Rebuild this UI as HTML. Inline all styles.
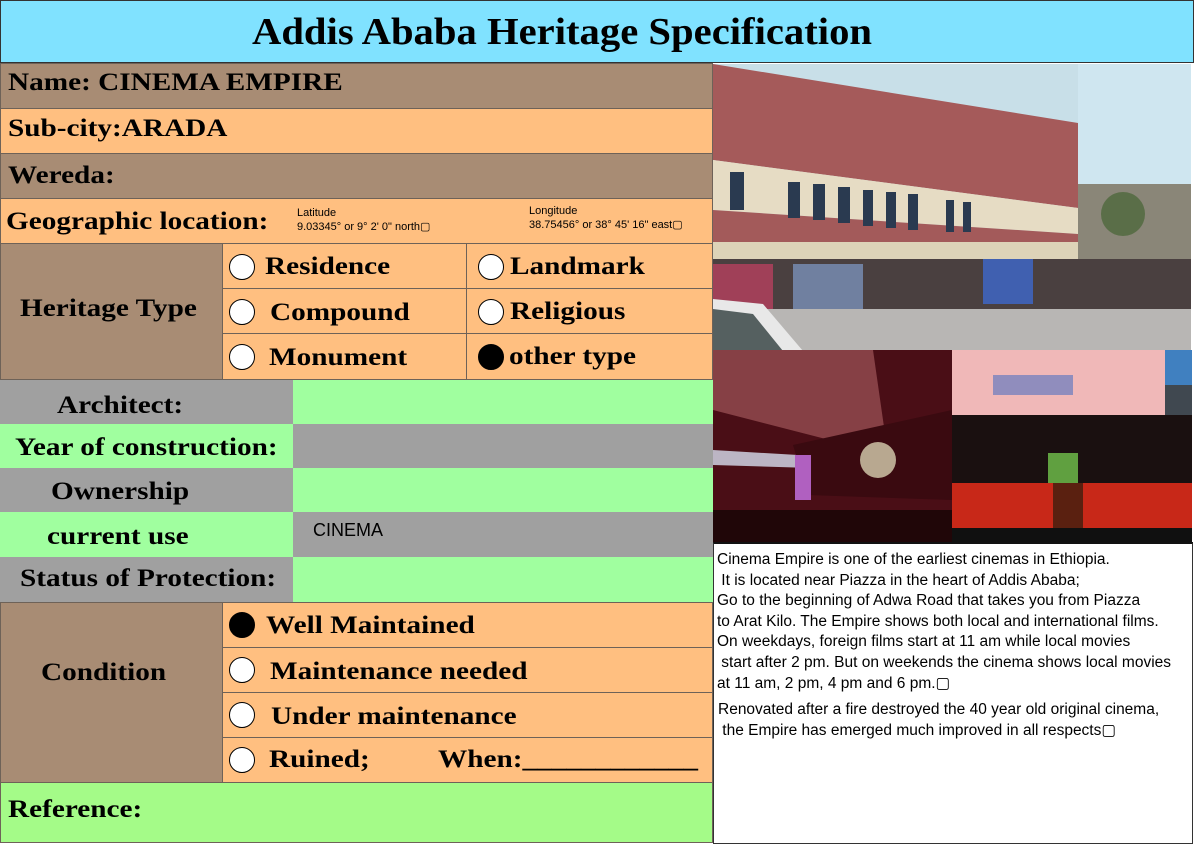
<!DOCTYPE html>
<html><head><meta charset="utf-8"><style>
*{margin:0;padding:0;box-sizing:border-box}
body{width:1194px;height:844px;position:relative;background:#fff;overflow:hidden;font-family:"Liberation Serif",serif}
.b{position:absolute}
.s{font-family:"Liberation Serif",serif;font-weight:bold;color:#000;position:absolute;white-space:nowrap;line-height:1;font-size:25px;transform:scaleX(1.17);transform-origin:0 0}
.br{background:#a88c74}.or{background:#ffbf80}.gr{background:#a0a0a0}.gn{background:#a0ff9f}
.ln{border:1px solid #6e6258}
.c{position:absolute;width:26px;height:26px;border-radius:50%;background:#fff;border:1.5px solid #000}
.c.f{background:#000}
.sans{font-family:"Liberation Sans",sans-serif;position:absolute;white-space:nowrap;color:#000}
</style></head><body>
<div class="b" style="left:0;top:0;width:1194px;height:63px;background:#80e2ff;border:1.5px solid #333"></div>
<div class="b" style="left:0;width:1124px;text-align:center;top:13px;font-size:38px;font-weight:bold;line-height:1;white-space:nowrap;transform:scaleX(1.07);transform-origin:562px 0">Addis Ababa Heritage Specification</div>

<div class="b br ln" style="left:0;top:63px;width:713px;height:46px"></div>
<div class="s" style="left:8px;top:70px">Name: CINEMA EMPIRE</div>
<div class="b or ln" style="left:0;top:108px;width:713px;height:46px"></div>
<div class="s" style="left:8px;top:116px">Sub-city:ARADA</div>
<div class="b br ln" style="left:0;top:153px;width:713px;height:46px"></div>
<div class="s" style="left:8px;top:163px">Wereda:</div>
<div class="b or ln" style="left:0;top:198px;width:713px;height:46px"></div>
<div class="s" style="left:6px;top:209px">Geographic location:</div>
<div class="sans" style="left:297px;top:206px;font-size:11px;line-height:14px">Latitude<br>9.03345° or 9° 2' 0" north&#9634;</div>
<div class="sans" style="left:529px;top:204px;font-size:11px;line-height:14px">Longitude<br>38.75456° or 38° 45' 16" east&#9634;</div>

<div class="b br ln" style="left:0;top:243px;width:223px;height:137px"></div>
<div class="s" style="left:20px;top:296px">Heritage Type</div>
<div class="b or ln" style="left:222px;top:243px;width:245px;height:46px"></div>
<div class="b or ln" style="left:466px;top:243px;width:247px;height:46px"></div>
<div class="b or ln" style="left:222px;top:288px;width:245px;height:46px"></div>
<div class="b or ln" style="left:466px;top:288px;width:247px;height:46px"></div>
<div class="b or ln" style="left:222px;top:333px;width:245px;height:47px"></div>
<div class="b or ln" style="left:466px;top:333px;width:247px;height:47px"></div>
<div class="c" style="left:229px;top:254px"></div><div class="s" style="left:265px;top:254px">Residence</div>
<div class="c" style="left:229px;top:299px"></div><div class="s" style="left:270px;top:300px">Compound</div>
<div class="c" style="left:229px;top:344px"></div><div class="s" style="left:269px;top:345px">Monument</div>
<div class="c" style="left:478px;top:254px"></div><div class="s" style="left:510px;top:254px">Landmark</div>
<div class="c" style="left:478px;top:299px"></div><div class="s" style="left:510px;top:299px">Religious</div>
<div class="c f" style="left:478px;top:344px"></div><div class="s" style="left:509px;top:344px">other type</div>

<div class="b gr" style="left:0;top:380px;width:293px;height:44px"></div><div class="b gn" style="left:293px;top:380px;width:420px;height:44px"></div>
<div class="b gn" style="left:0;top:424px;width:293px;height:44px"></div><div class="b gr" style="left:293px;top:424px;width:420px;height:44px"></div>
<div class="b gr" style="left:0;top:468px;width:293px;height:44px"></div><div class="b gn" style="left:293px;top:468px;width:420px;height:44px"></div>
<div class="b gn" style="left:0;top:512px;width:293px;height:45px"></div><div class="b gr" style="left:293px;top:512px;width:420px;height:45px"></div>
<div class="b gr" style="left:0;top:557px;width:293px;height:45px"></div><div class="b gn" style="left:293px;top:557px;width:420px;height:45px"></div>
<div class="s" style="left:57px;top:393px">Architect:</div>
<div class="s" style="left:15px;top:435px">Year of construction:</div>
<div class="s" style="left:51px;top:479px">Ownership</div>
<div class="s" style="left:47px;top:524px">current use</div>
<div class="sans" style="left:313px;top:520px;font-size:18px">CINEMA</div>
<div class="s" style="left:20px;top:566px">Status of Protection:</div>

<div class="b br ln" style="left:0;top:602px;width:223px;height:181px"></div>
<div class="s" style="left:41px;top:660px">Condition</div>
<div class="b or ln" style="left:222px;top:602px;width:491px;height:46px"></div>
<div class="b or ln" style="left:222px;top:647px;width:491px;height:46px"></div>
<div class="b or ln" style="left:222px;top:692px;width:491px;height:46px"></div>
<div class="b or ln" style="left:222px;top:737px;width:491px;height:46px"></div>
<div class="c f" style="left:229px;top:612px"></div><div class="s" style="left:266px;top:613px">Well Maintained</div>
<div class="c" style="left:229px;top:657px"></div><div class="s" style="left:270px;top:659px">Maintenance needed</div>
<div class="c" style="left:229px;top:702px"></div><div class="s" style="left:271px;top:704px">Under maintenance</div>
<div class="c" style="left:229px;top:747px"></div><div class="s" style="left:269px;top:747px">Ruined;</div>
<div class="s" style="left:438px;top:747px">When:____________</div>

<div class="b ln" style="left:0;top:782px;width:713px;height:61px;background:#a4fb88"></div>
<div class="s" style="left:8px;top:797px">Reference:</div>

<svg class="b" style="left:713px;top:64px" width="478" height="287" viewBox="0 0 478 287">
<rect width="478" height="287" fill="#c8dfe8"/>
<rect x="365" y="0" width="113" height="170" fill="#cfe6f0"/>
<polygon points="0,0 365,59 365,144 0,96" fill="#a55a5a"/>
<polygon points="0,96 365,144 365,170 0,146" fill="#e6dcc4"/>
<polygon points="0,146 365,170 365,182 0,178" fill="#a35a5a"/>
<rect x="0" y="178" width="478" height="75" fill="#ddd3b8"/>
<rect x="365" y="120" width="113" height="133" fill="#8a8678"/>
<circle cx="410" cy="150" r="22" fill="#5a6e48"/>
<rect x="0" y="195" width="478" height="55" fill="#4a4040"/>
<rect x="0" y="200" width="60" height="45" fill="#a04058"/>
<rect x="80" y="200" width="70" height="45" fill="#7080a0"/>
<rect x="270" y="195" width="50" height="45" fill="#4060b0"/>
<rect x="0" y="245" width="478" height="42" fill="#b8b6b4"/>
<polygon points="0,235 50,240 90,287 0,287" fill="#e8e8e8"/>
<polygon points="0,245 40,250 70,287 0,287" fill="#556060"/>
<g fill="#2a3a50"><rect x="17" y="108" width="14" height="38"/><rect x="75" y="118" width="12" height="36"/><rect x="100" y="120" width="12" height="36"/><rect x="125" y="123" width="12" height="36"/><rect x="150" y="126" width="10" height="36"/><rect x="173" y="128" width="10" height="36"/><rect x="195" y="130" width="10" height="36"/><rect x="233" y="136" width="8" height="32"/><rect x="250" y="138" width="8" height="30"/></g>
</svg>
<svg class="b" style="left:713px;top:350px" width="479" height="192" viewBox="0 0 479 192">
<rect x="0" y="0" width="239" height="192" fill="#4a0e16"/>
<polygon points="0,0 160,0 175,105 0,60" fill="#a0555a" opacity=".7"/>
<polygon points="0,100 170,110 165,120 0,115" fill="#d8e0f0" opacity=".8"/>
<polygon points="80,95 239,60 239,150 95,145" fill="#3a0a10"/>
<circle cx="165" cy="110" r="18" fill="#b8a890"/>
<rect x="82" y="105" width="16" height="45" fill="#b060c0"/>
<rect x="0" y="160" width="239" height="32" fill="#200608"/>
<rect x="239" y="0" width="213" height="65" fill="#f0b8b8"/>
<rect x="452" y="0" width="27" height="65" fill="#4080c0"/>
<rect x="452" y="35" width="27" height="30" fill="#404850"/>
<rect x="280" y="25" width="80" height="20" fill="#5070c0" opacity=".6"/>
<rect x="239" y="65" width="240" height="127" fill="#1a1010"/>
<rect x="335" y="103" width="30" height="30" fill="#60a040"/>
<rect x="239" y="133" width="240" height="45" fill="#c82818"/>
<rect x="340" y="133" width="30" height="45" fill="#5a2010"/>
<rect x="239" y="178" width="240" height="14" fill="#101010"/>
</svg>

<div class="b" style="left:713px;top:542px;width:480px;height:302px;border:1px solid #333;border-top:2px solid #111;background:#fff"></div>
<div class="sans" style="left:717px;top:550px;font-size:15.5px;line-height:20.6px">Cinema Empire is one of the earliest cinemas in Ethiopia.<br>&nbsp;It is located near Piazza in the heart of Addis Ababa;<br>Go to the beginning of Adwa Road that takes you from Piazza<br>to Arat Kilo. The Empire shows both local and international films.<br>On weekdays, foreign films start at 11 am while local movies<br>&nbsp;start after 2 pm. But on weekends the cinema shows local movies<br>at 11 am, 2 pm, 4 pm and 6 pm.&#9634;</div>
<div class="sans" style="left:718px;top:699px;font-size:15.5px;line-height:21px">Renovated after a fire destroyed the 40 year old original cinema,<br>&nbsp;the Empire has emerged much improved in all respects&#9634;</div>
</body></html>
